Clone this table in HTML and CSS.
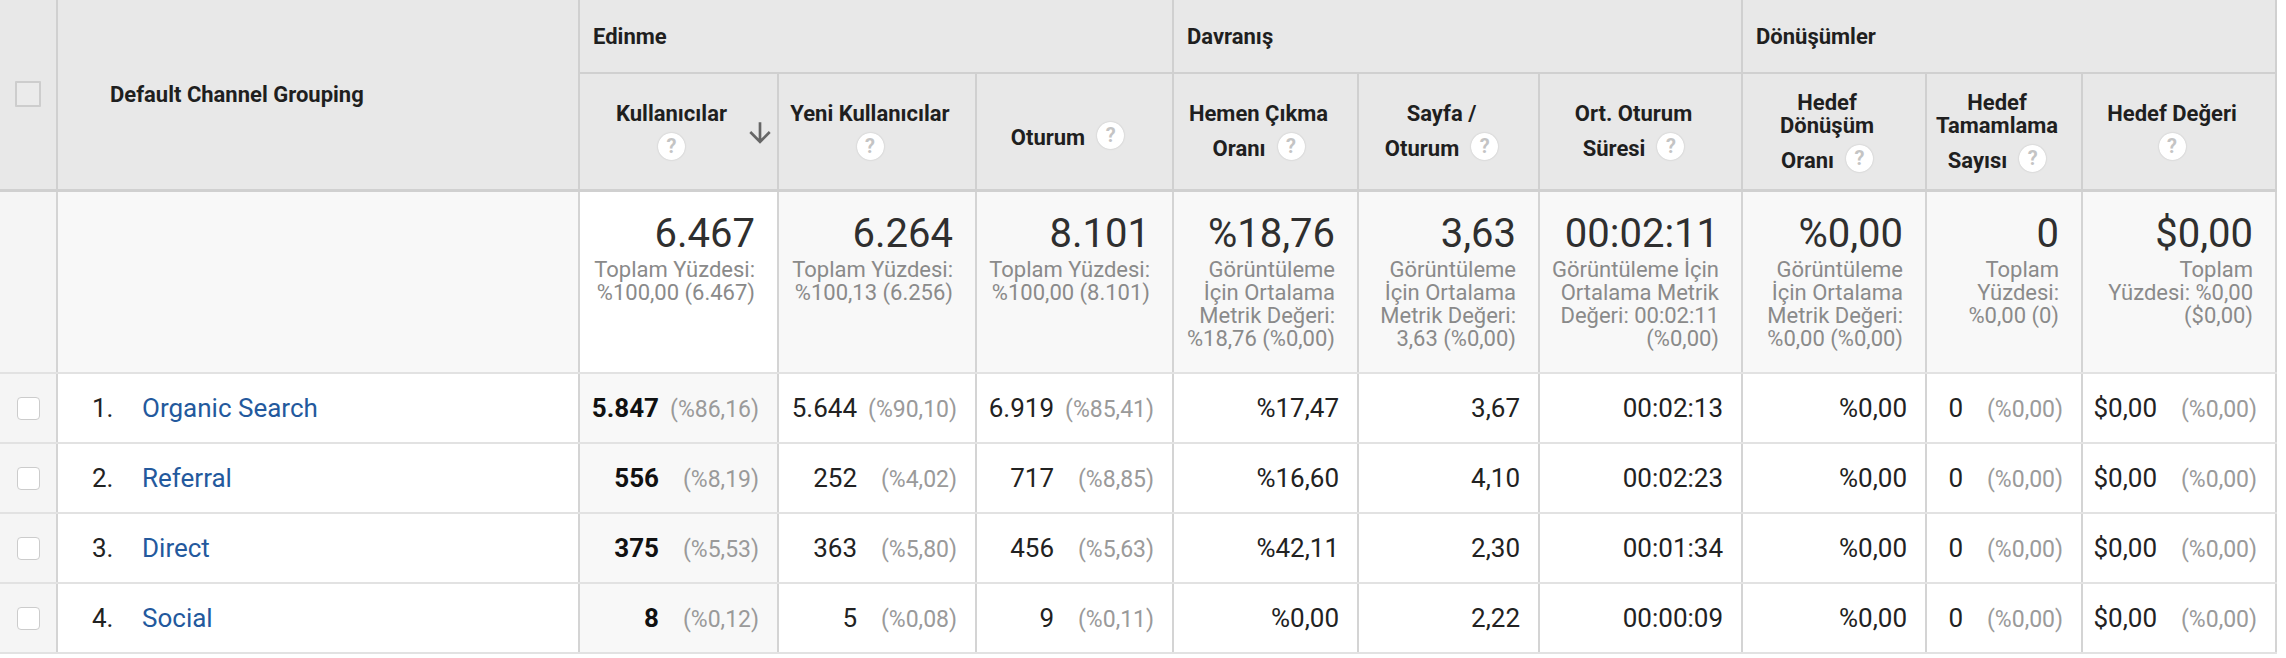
FILE: index.html
```html
<!DOCTYPE html>
<html lang="tr">
<head>
<meta charset="utf-8">
<title>Default Channel Grouping</title>
<link rel="stylesheet" href="styles.css">
</head>
<body>
<table class="report">
  <colgroup>
    <col class="w-chk"><col class="w-name"><col class="w-users"><col class="w-new"><col class="w-sess"><col class="w-bounce"><col class="w-pps"><col class="w-dur"><col class="w-conv"><col class="w-comp"><col class="w-val">
  </colgroup>
  <thead>
    <tr class="group-row">
      <th rowspan="2" class="chk-head"><span class="box box-head"></span></th>
      <th rowspan="2" class="dim-head">Default Channel Grouping</th>
      <th colspan="3" class="group">Edinme</th>
      <th colspan="3" class="group">Davranış</th>
      <th colspan="3" class="group">Dönüşümler</th>
    </tr>
    <tr class="metric-row">
      <th class="metric sorted-head">Kullanıcılar<br><span class="help solo">?</span><svg class="sort-arrow" viewBox="0 0 24 24" width="32" height="32"><path d="M20 12l-1.41-1.41L13 16.17V4h-2v12.17l-5.58-5.59L4 12l8 8 8-8z"/></svg></th>
      <th class="metric">Yeni Kullanıcılar<br><span class="help solo">?</span></th>
      <th class="metric">Oturum<span class="help">?</span></th>
      <th class="metric">Hemen Çıkma<br>Oranı<span class="help">?</span></th>
      <th class="metric">Sayfa /<br>Oturum<span class="help">?</span></th>
      <th class="metric">Ort. Oturum<br>Süresi<span class="help">?</span></th>
      <th class="metric">Hedef<br>Dönüşüm<br>Oranı<span class="help">?</span></th>
      <th class="metric">Hedef<br>Tamamlama<br>Sayısı<span class="help">?</span></th>
      <th class="metric">Hedef Değeri<br><span class="help solo">?</span></th>
    </tr>
  </thead>
  <tbody>
    <tr class="totals">
      <td class="chk-cell"></td>
      <td class="name-cell"></td>
      <td class="tot tot-sorted"><div class="big">6.467</div><div class="sub">Toplam Yüzdesi:<br>%100,00 (6.467)</div></td>
      <td class="tot"><div class="big">6.264</div><div class="sub">Toplam Yüzdesi:<br>%100,13 (6.256)</div></td>
      <td class="tot"><div class="big">8.101</div><div class="sub">Toplam Yüzdesi:<br>%100,00 (8.101)</div></td>
      <td class="tot"><div class="big">%18,76</div><div class="sub">Görüntüleme<br>İçin Ortalama<br>Metrik Değeri:<br>%18,76 (%0,00)</div></td>
      <td class="tot"><div class="big">3,63</div><div class="sub">Görüntüleme<br>İçin Ortalama<br>Metrik Değeri:<br>3,63 (%0,00)</div></td>
      <td class="tot"><div class="big">00:02:11</div><div class="sub">Görüntüleme İçin<br>Ortalama Metrik<br>Değeri: 00:02:11<br>(%0,00)</div></td>
      <td class="tot"><div class="big">%0,00</div><div class="sub">Görüntüleme<br>İçin Ortalama<br>Metrik Değeri:<br>%0,00 (%0,00)</div></td>
      <td class="tot"><div class="big">0</div><div class="sub">Toplam<br>Yüzdesi:<br>%0,00 (0)</div></td>
      <td class="tot"><div class="big">$0,00</div><div class="sub">Toplam<br>Yüzdesi: %0,00<br>($0,00)</div></td>
    </tr>
    <tr class="row">
      <td class="chk-cell"><span class="box"></span></td>
      <td class="name-cell"><span class="idx">1.</span><a class="link" href="#">Organic Search</a></td>
      <td class="val val-sorted"><b class="num">5.847</b><span class="pct">(%86,16)</span></td>
      <td class="val"><span class="num">5.644</span><span class="pct">(%90,10)</span></td>
      <td class="val"><span class="num">6.919</span><span class="pct">(%85,41)</span></td>
      <td class="val"><span class="num">%17,47</span></td>
      <td class="val"><span class="num">3,67</span></td>
      <td class="val"><span class="num">00:02:13</span></td>
      <td class="val"><span class="num">%0,00</span></td>
      <td class="val"><span class="num">0</span><span class="pct">(%0,00)</span></td>
      <td class="val"><span class="num">$0,00</span><span class="pct">(%0,00)</span></td>
    </tr>
    <tr class="row">
      <td class="chk-cell"><span class="box"></span></td>
      <td class="name-cell"><span class="idx">2.</span><a class="link" href="#">Referral</a></td>
      <td class="val val-sorted"><b class="num">556</b><span class="pct">(%8,19)</span></td>
      <td class="val"><span class="num">252</span><span class="pct">(%4,02)</span></td>
      <td class="val"><span class="num">717</span><span class="pct">(%8,85)</span></td>
      <td class="val"><span class="num">%16,60</span></td>
      <td class="val"><span class="num">4,10</span></td>
      <td class="val"><span class="num">00:02:23</span></td>
      <td class="val"><span class="num">%0,00</span></td>
      <td class="val"><span class="num">0</span><span class="pct">(%0,00)</span></td>
      <td class="val"><span class="num">$0,00</span><span class="pct">(%0,00)</span></td>
    </tr>
    <tr class="row">
      <td class="chk-cell"><span class="box"></span></td>
      <td class="name-cell"><span class="idx">3.</span><a class="link" href="#">Direct</a></td>
      <td class="val val-sorted"><b class="num">375</b><span class="pct">(%5,53)</span></td>
      <td class="val"><span class="num">363</span><span class="pct">(%5,80)</span></td>
      <td class="val"><span class="num">456</span><span class="pct">(%5,63)</span></td>
      <td class="val"><span class="num">%42,11</span></td>
      <td class="val"><span class="num">2,30</span></td>
      <td class="val"><span class="num">00:01:34</span></td>
      <td class="val"><span class="num">%0,00</span></td>
      <td class="val"><span class="num">0</span><span class="pct">(%0,00)</span></td>
      <td class="val"><span class="num">$0,00</span><span class="pct">(%0,00)</span></td>
    </tr>
    <tr class="row">
      <td class="chk-cell"><span class="box"></span></td>
      <td class="name-cell"><span class="idx">4.</span><a class="link" href="#">Social</a></td>
      <td class="val val-sorted"><b class="num">8</b><span class="pct">(%0,12)</span></td>
      <td class="val"><span class="num">5</span><span class="pct">(%0,08)</span></td>
      <td class="val"><span class="num">9</span><span class="pct">(%0,11)</span></td>
      <td class="val"><span class="num">%0,00</span></td>
      <td class="val"><span class="num">2,22</span></td>
      <td class="val"><span class="num">00:00:09</span></td>
      <td class="val"><span class="num">%0,00</span></td>
      <td class="val"><span class="num">0</span><span class="pct">(%0,00)</span></td>
      <td class="val"><span class="num">$0,00</span><span class="pct">(%0,00)</span></td>
    </tr>
  </tbody>
</table>
</body>
</html>
```

FILE: styles.css
```css
html, body {
  margin: 0;
  padding: 0;
  background: #ffffff;
}

body {
  font-family: Roboto, "Liberation Sans", Arial, sans-serif;
  color: #222222;
}

.report {
  border-collapse: collapse;
  table-layout: fixed;
  width: 2277px;
}

.w-chk { width: 57px; }
.w-name { width: 522px; }
.w-users { width: 199px; }
.w-new { width: 198px; }
.w-sess { width: 197px; }
.w-bounce { width: 185px; }
.w-pps { width: 181px; }
.w-dur { width: 203px; }
.w-conv { width: 184px; }
.w-comp { width: 156px; }
.w-val { width: 194px; }

/* ---------- header ---------- */
.report th {
  background: #e8e8e8;
  font-size: 22px;
  font-weight: 700;
  color: #1f1f1f;
  line-height: 23px;
  border-right: 2px solid #d0d0d0;
  border-bottom: 2px solid #d0d0d0;
  padding: 0;
}

.group-row { height: 73px; }
.metric-row { height: 117px; }

.chk-head {
  text-align: center;
  vertical-align: middle;
  border-bottom: 3px solid #d0d0d0 !important;
}

.dim-head {
  text-align: left;
  vertical-align: middle;
  padding-left: 52px !important;
  border-bottom: 3px solid #d0d0d0 !important;
}

.group {
  text-align: left;
  vertical-align: middle;
  padding-left: 13px !important;
}

.metric {
  text-align: center;
  vertical-align: middle;
  padding: 0 22px 0 8px !important;
  border-bottom: 3px solid #d0d0d0 !important;
  position: relative;
}

.help {
  display: inline-block;
  width: 27px;
  height: 27px;
  margin: 8px 0 0 12px;
  border-radius: 50%;
  background: #ffffff;
  box-shadow: 0 0 2px rgba(0, 0, 0, 0.18);
  color: #c4c4c4;
  font-size: 20px;
  font-weight: 700;
  line-height: 27px;
  text-align: center;
  vertical-align: 3px;
}

.help.solo {
  margin-left: 0;
}

.sort-arrow {
  position: absolute;
  right: 1px;
  top: 43px;
  fill: #666666;
}

.box {
  display: inline-block;
  width: 21px;
  height: 21px;
  border: 1.5px solid #cccccc;
  border-radius: 4px;
  background: #ffffff;
  vertical-align: middle;
}

.box-head {
  width: 22px;
  height: 22px;
  border: 2px solid #cdcdcd;
  border-radius: 1px;
  background: #ebebeb;
}

/* ---------- body ---------- */
.report td {
  padding: 0;
  border-right: 2px solid #d4d4d4;
  border-bottom: 2px solid #e2e2e2;
}

.totals { height: 183px; }
.totals td {
  background: #f8f8f8;
  vertical-align: top;
}

.tot {
  text-align: right;
  padding: 20px 22px 0 4px !important;
  white-space: nowrap;
}

.totals .tot-sorted {
  background: #ffffff;
}

.big {
  font-size: 40px;
  line-height: 44px;
  color: #2f2f2f;
}

.sub {
  margin-top: 2px;
  font-size: 22px;
  line-height: 23px;
  color: #8a8a8a;
}

.row { height: 70px; }
.row td {
  background: #ffffff;
  vertical-align: middle;
}

.row .chk-cell {
  background: #f5f5f5;
  text-align: center;
}

.totals .chk-cell {
  background: #f5f5f5;
}

.name-cell {
  padding-left: 34px !important;
  font-size: 26px;
  white-space: nowrap;
}

.idx {
  display: inline-block;
  width: 50px;
  color: #222222;
}

.link {
  color: #23599d;
  text-decoration: none;
}

.val {
  text-align: right;
  padding-right: 18px !important;
  white-space: nowrap;
  font-size: 26px;
  color: #222222;
}

.row .val-sorted {
  background: #f8f8f8;
}

.num {
  font-weight: 400;
}

b.num {
  font-weight: 700;
  color: #111111;
}

.pct {
  display: inline-block;
  width: 100px;
  text-align: right;
  font-size: 23px;
  color: #9a9a9a;
}
```
